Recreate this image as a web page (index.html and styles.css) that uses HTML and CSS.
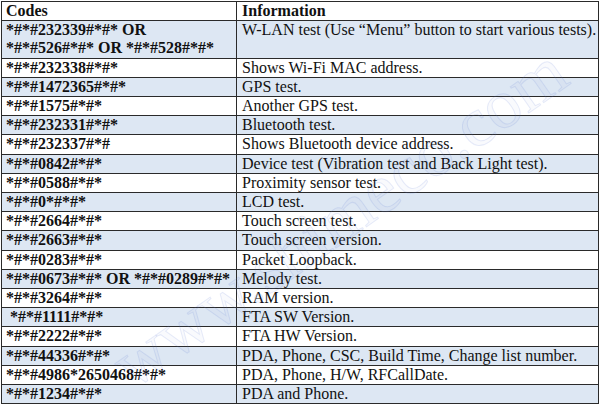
FILE: index.html
```html
<!DOCTYPE html>
<html>
<head>
<meta charset="utf-8">
<link rel="stylesheet" href="styles.css">
</head>
<body>
<div class="wrap">
<table class="codes">
<colgroup><col class="c1"><col class="c2"></colgroup>
<tr class="head"><th>Codes</th><th>Information</th></tr>
<tr><td class="code">*#*#232339#*#* OR<br>*#*#526#*#* OR *#*#528#*#*</td><td>W-LAN test (Use “Menu” button to start various tests).</td></tr>
<tr><td class="code">*#*#232338#*#*</td><td>Shows Wi-Fi MAC address.</td></tr>
<tr><td class="code">*#*#1472365#*#*</td><td>GPS test.</td></tr>
<tr><td class="code">*#*#1575#*#*</td><td>Another GPS test.</td></tr>
<tr><td class="code">*#*#232331#*#*</td><td>Bluetooth test.</td></tr>
<tr><td class="code">*#*#232337#*#</td><td>Shows Bluetooth device address.</td></tr>
<tr><td class="code">*#*#0842#*#*</td><td>Device test (Vibration test and Back Light test).</td></tr>
<tr><td class="code">*#*#0588#*#*</td><td>Proximity sensor test.</td></tr>
<tr><td class="code">*#*#0*#*#*</td><td>LCD test.</td></tr>
<tr><td class="code">*#*#2664#*#*</td><td>Touch screen test.</td></tr>
<tr><td class="code">*#*#2663#*#*</td><td>Touch screen version.</td></tr>
<tr><td class="code">*#*#0283#*#*</td><td>Packet Loopback.</td></tr>
<tr><td class="code">*#*#0673#*#* OR *#*#0289#*#*</td><td>Melody test.</td></tr>
<tr><td class="code">*#*#3264#*#*</td><td>RAM version.</td></tr>
<tr><td class="code indent">*#*#1111#*#*</td><td>FTA SW Version.</td></tr>
<tr><td class="code">*#*#2222#*#*</td><td>FTA HW Version.</td></tr>
<tr><td class="code">*#*#44336#*#*</td><td>PDA, Phone, CSC, Build Time, Change list number.</td></tr>
<tr><td class="code">*#*#4986*2650468#*#*</td><td>PDA, Phone, H/W, RFCallDate.</td></tr>
<tr><td class="code">*#*#1234#*#*</td><td>PDA and Phone.</td></tr>
</table>
<div class="watermark">www.shimeco.com</div>
</div>
</body>
</html>
```
FILE: styles.css
```css
html, body {
  margin: 0;
  padding: 0;
  background: #ffffff;
}
.wrap {
  position: relative;
  width: 600px;
  height: 405px;
  overflow: hidden;
  padding: 1px 0 0 1px;
  box-sizing: border-box;
}
.codes {
  border-collapse: collapse;
  table-layout: fixed;
  width: 597px;
  font-family: "Liberation Serif", "Times New Roman", serif;
  font-size: 16px;
  line-height: 18.2px;
  color: #111;
}
.c1 { width: 235px; }
.c2 { width: 362px; }
.codes th, .codes td {
  border: 1px solid #2a2a2a;
  padding: 0 4px;
  vertical-align: top;
  text-align: left;
  white-space: nowrap;
  overflow: hidden;
}
.codes th {
  font-weight: bold;
  background: #ffffff;
}
.codes td:last-child, .codes th:last-child {
  padding-left: 5px;
}
.codes tr:nth-child(even) td {
  background: #dde7f3;
}
.code {
  font-weight: bold;
}
.indent {
  padding-left: 8px !important;
}
.watermark {
  position: absolute;
  left: 140px;
  top: 330px;
  height: 70px;
  font-family: "Liberation Serif", serif;
  font-size: 70px;
  line-height: 70px;
  color: rgba(90, 120, 210, 0.04);
  transform: rotate(-35deg);
  transform-origin: left bottom;
  white-space: nowrap;
  pointer-events: none;
  -webkit-text-stroke: 1px rgba(90, 120, 210, 0.14);
}
```
